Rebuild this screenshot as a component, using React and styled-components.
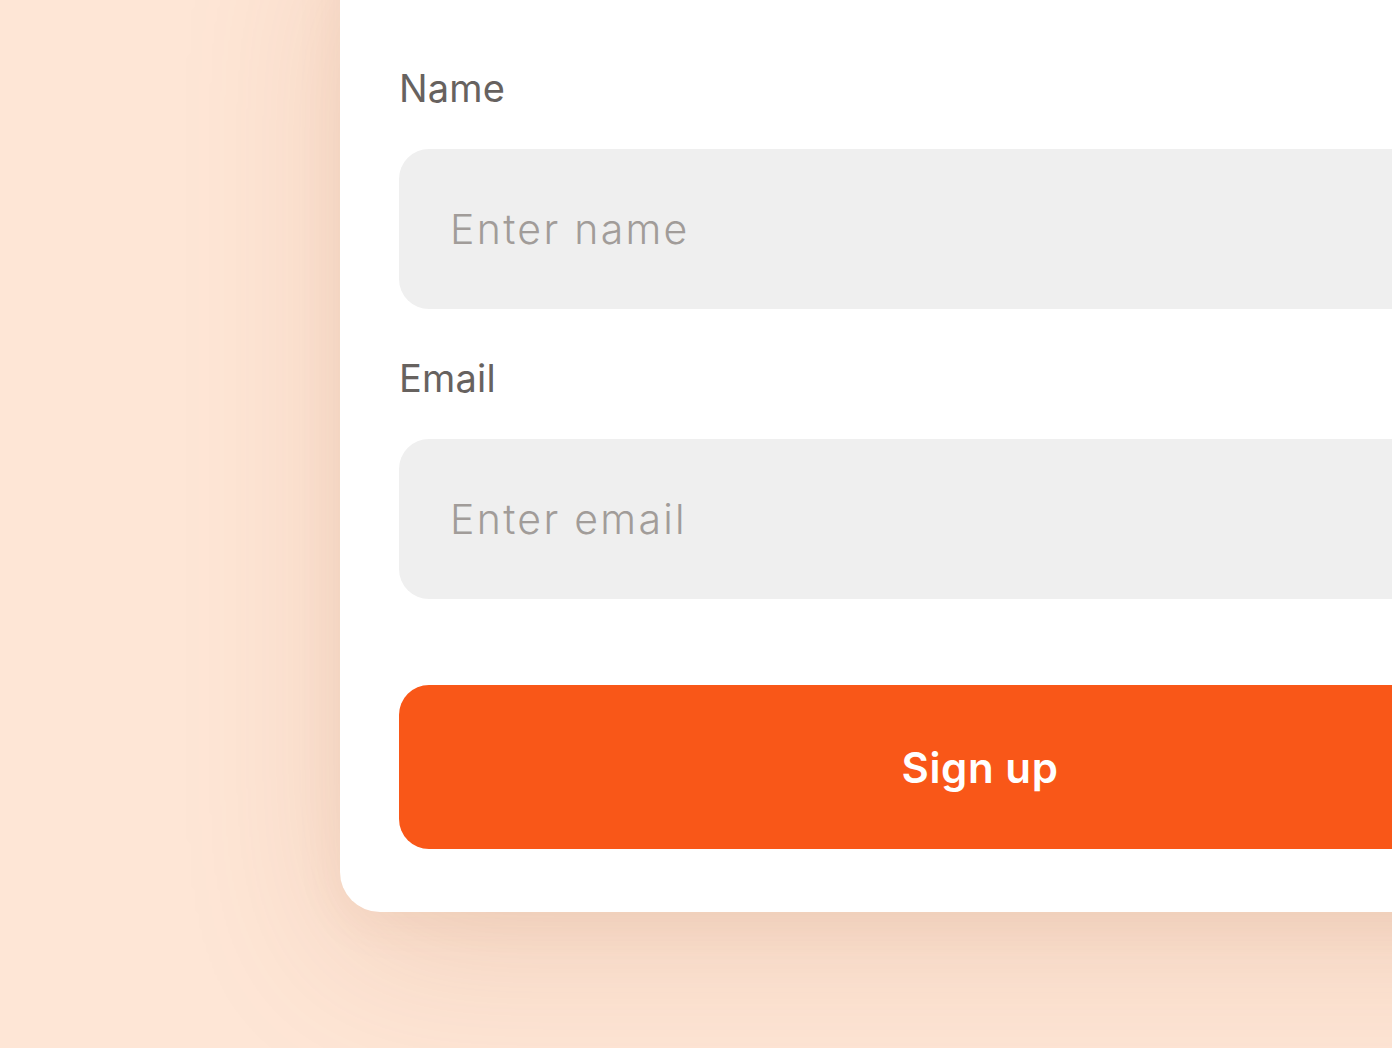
import React from "react";
import styled, { createGlobalStyle } from "styled-components";

const Global = createGlobalStyle`
  html, body { margin: 0; padding: 0; }
  body {
    background: #fee6d6;
    font-family: Inter, "Noto Sans", sans-serif;
    overflow: hidden;
  }
`;

const Page = styled.div`
  height: 1048px;
  width: 1392px;
  overflow: hidden;
  display: flex;
  flex-direction: column;
  justify-content: flex-end;
  padding: 0 0 136px 340px;
  box-sizing: border-box;
  background: #fee6d6;
`;

const Card = styled.form`
  flex-shrink: 0;
  width: 1280px;
  box-sizing: border-box;
  background: #ffffff;
  border-radius: 40px;
  padding: 160px 59px 63px;
  display: flex;
  flex-direction: column;
  box-shadow: 0 40px 160px rgba(170, 95, 55, 0.17), 0 10px 50px rgba(170, 95, 55, 0.07);
`;

const Field = styled.div`
  display: flex;
  flex-direction: column;
  gap: 36px;
  margin-top: ${(p) => p.$top || 0}px;
`;

const Label = styled.label`
  font-family: Inter, "Noto Sans", sans-serif;
  font-size: 38px;
  line-height: 48px;
  font-weight: 400;
  color: #67625f;
  letter-spacing: 0.2px;
  position: relative;
  top: -1px;
`;

const Input = styled.input`
  height: 160px;
  box-sizing: border-box;
  border: none;
  outline: none;
  border-radius: 30px;
  background: #efefef;
  padding: 0 51px;
  font-family: Inter, "Noto Sans", sans-serif;
  font-size: 41px;
  font-weight: 300;
  letter-spacing: 2.3px;
  color: #444;
  &::placeholder {
    color: #a19c99;
  }
`;

const Button = styled.button`
  margin-top: 86px;
  height: 164px;
  border: none;
  border-radius: 30px;
  background: #f95718;
  color: #ffffff;
  font-family: Inter, "Noto Sans", sans-serif;
  font-size: 42px;
  font-weight: 600;
  letter-spacing: 0.6px;
  cursor: pointer;
`;

export default function App() {
  return (
    <>
      <Global />
      <Page>
        <Card onSubmit={(e) => e.preventDefault()}>
          <Field>
            <Label htmlFor="name">Name</Label>
            <Input id="name" type="text" placeholder="Enter name" />
          </Field>
          <Field $top={46}>
            <Label htmlFor="email">Email</Label>
            <Input id="email" type="email" placeholder="Enter email" />
          </Field>
          <Button type="submit">Sign up</Button>
        </Card>
      </Page>
    </>
  );
}
